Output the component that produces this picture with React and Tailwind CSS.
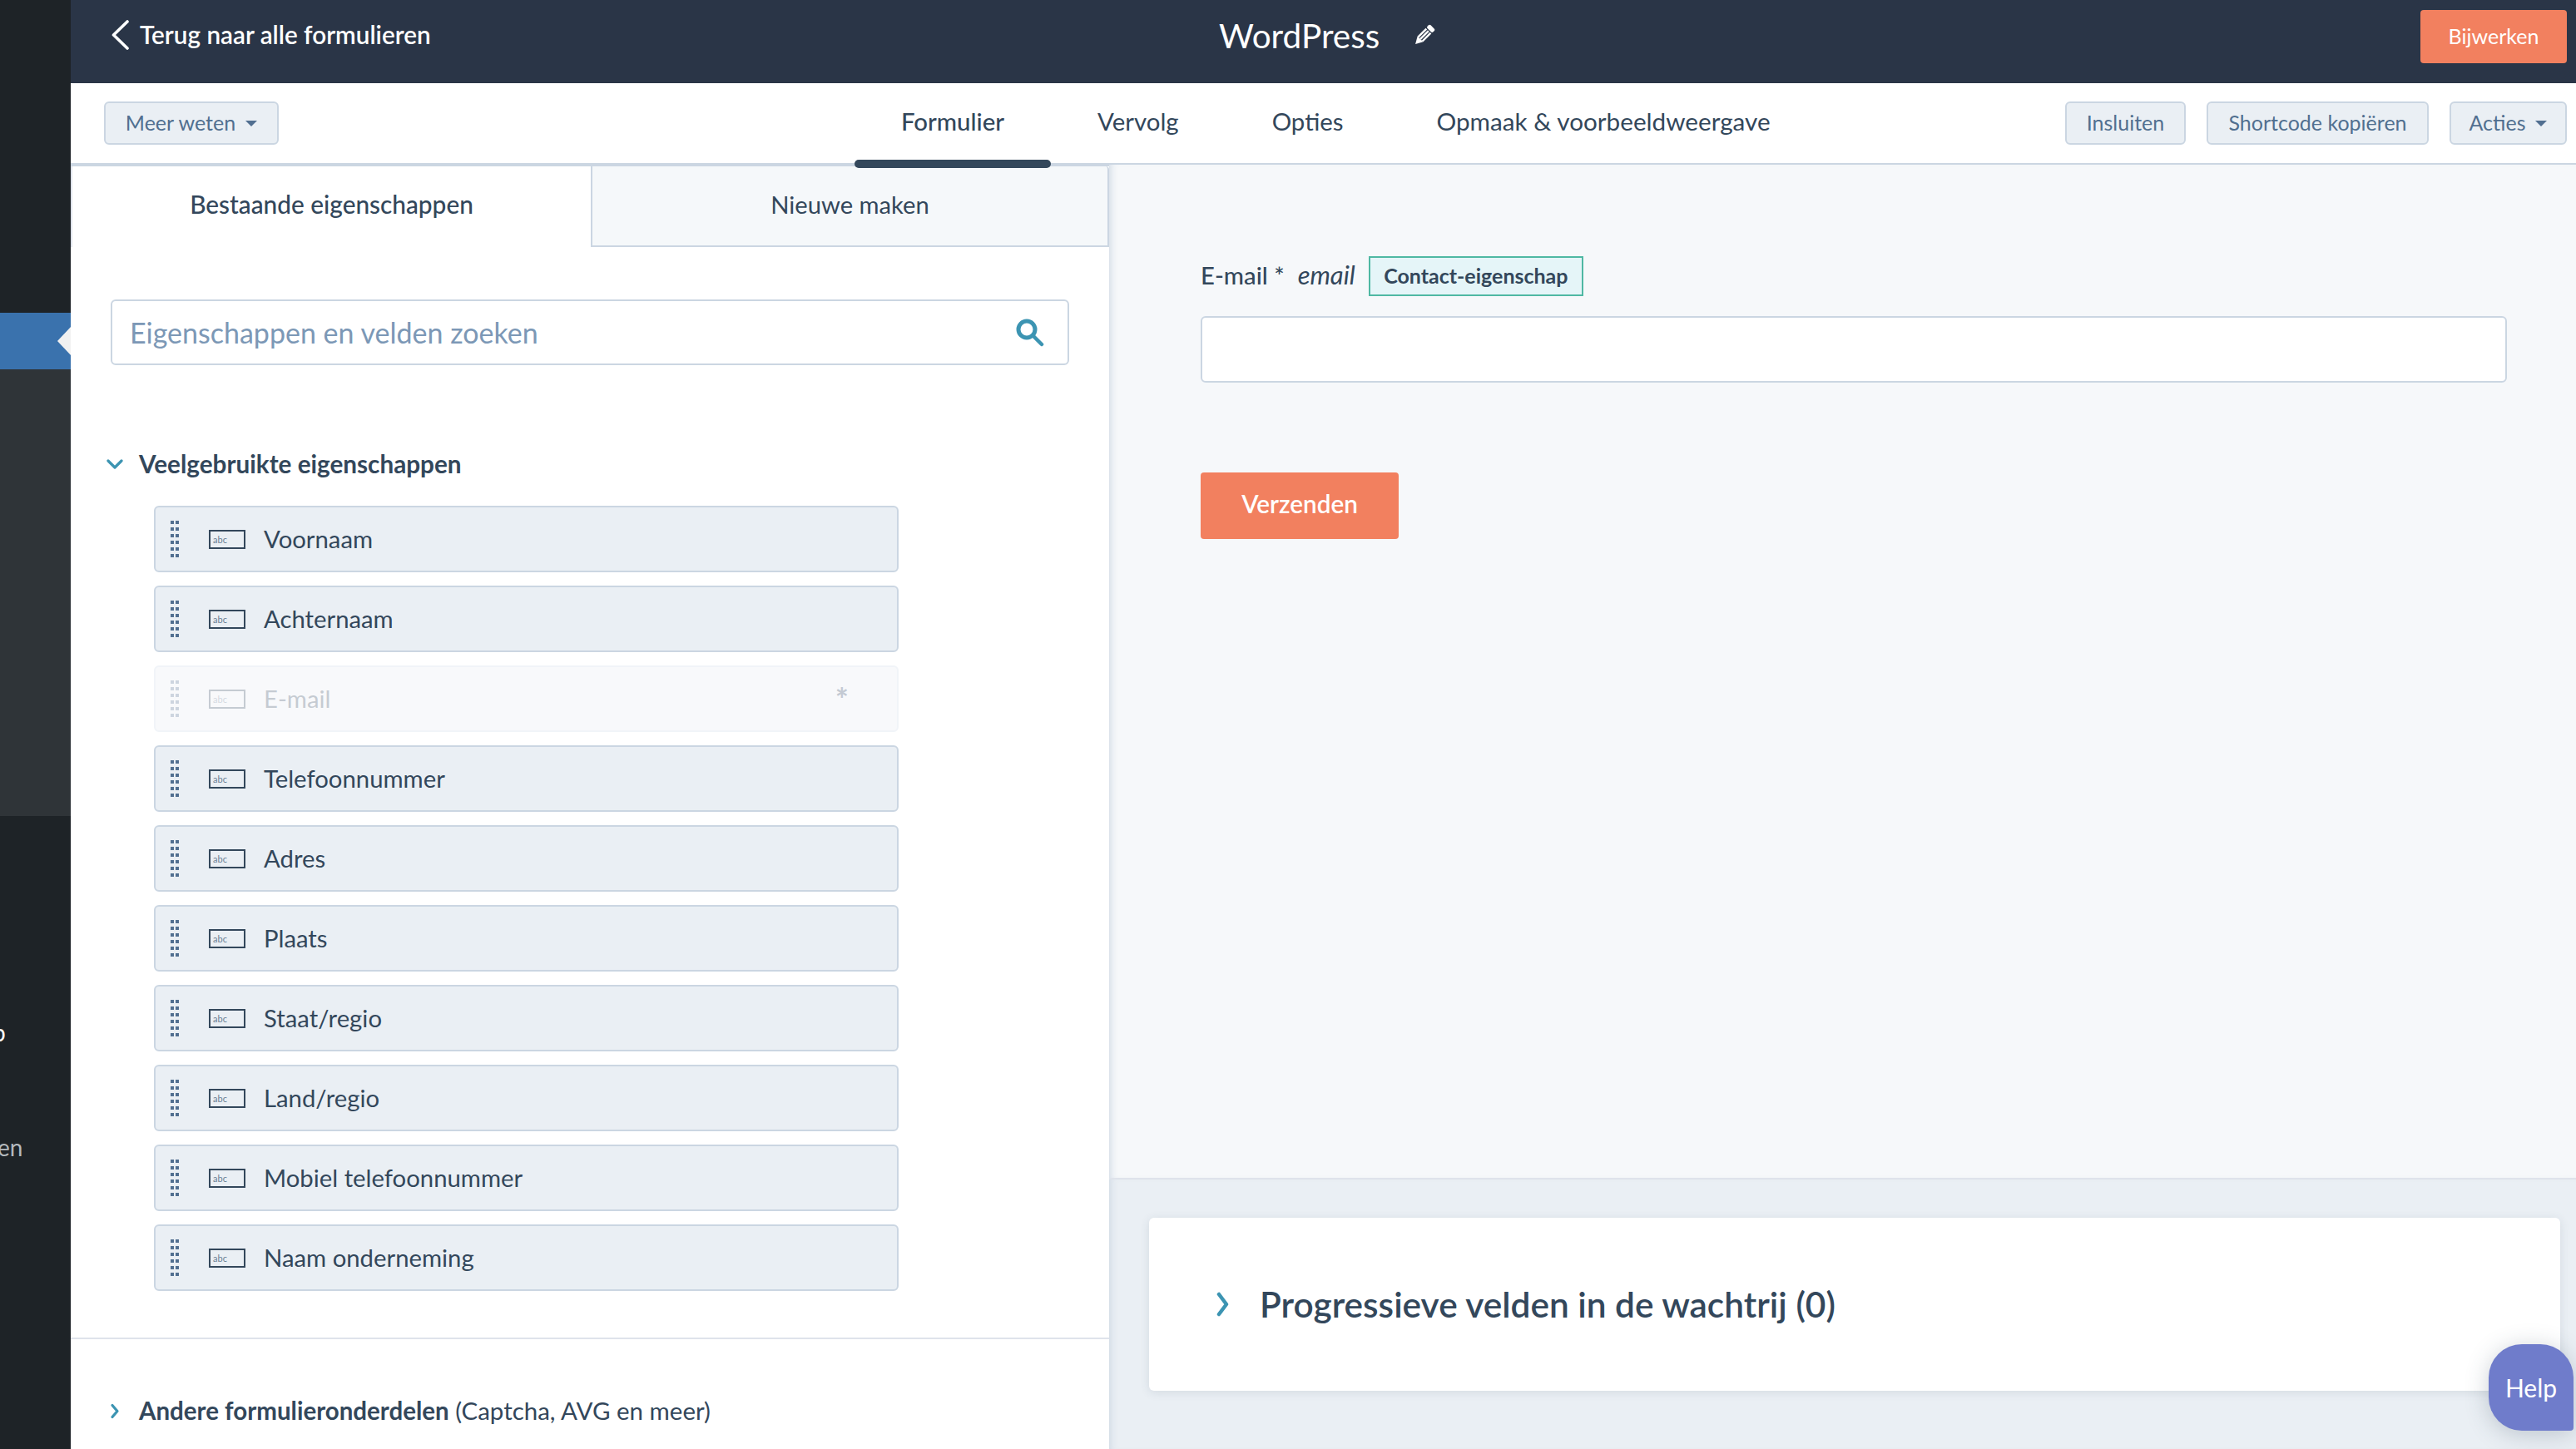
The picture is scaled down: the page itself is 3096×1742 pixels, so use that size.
const fields = [
  { label: "Voornaam" },
  { label: "Achternaam" },
  { label: "E-mail", muted: true },
  { label: "Telefoonnummer" },
  { label: "Adres" },
  { label: "Plaats" },
  { label: "Staat/regio" },
  { label: "Land/regio" },
  { label: "Mobiel telefoonnummer" },
  { label: "Naam onderneming" },
];

const Caret = () => (
  <span className="ml-[12px] w-0 h-0 border-x-[7px] border-x-transparent border-t-[7px] border-t-[#516f90]"></span>
);

const GreyButton = ({ children, className = "" }) => (
  <button className={`h-[52px] flex items-center justify-center bg-[#eaeff4] border-2 border-[#cbd6e2] rounded-[6px] text-[25px] text-[#516f90] ${className}`}>
    {children}
  </button>
);

const Grip = () => (
  <div className="grid grid-cols-2 gap-x-[2px] gap-y-[4px] w-[10px]">
    {Array.from({ length: 12 }).map((_, i) => (
      <span key={i} className="w-[4px] h-[4px] bg-[#516f90]"></span>
    ))}
  </div>
);

const FieldRow = ({ label, muted }) => (
  <div className={`h-[80px] flex items-center border-2 rounded-[6px] ${muted ? "bg-[#f8f9fb] border-[#f1f4f8]" : "bg-[#eaeff4] border-[#cbd6e2]"}`}>
    <div className={`flex items-center flex-1 pl-[18px] ${muted ? "opacity-25" : ""}`}>
      <Grip />
      <div className="ml-[36px] w-[44px] h-[23px] border-2 border-[#33475b] flex items-center pl-[3px] text-[11px] leading-none text-[#6b7f95]">
        abc
      </div>
      <span className="ml-[22px] text-[29.3px] text-[#33475b]">{label}</span>
    </div>
    {muted && <span className="mr-[58px] text-[38px] font-bold leading-none text-[#c4cad3]">*</span>}
  </div>
);

const PencilIcon = () => (
  <svg viewBox="0 0 24 24" className="ml-[38px] w-[29px] h-[29px] text-white" fill="currentColor">
    <g transform="rotate(45 12 12)">
      <rect x="8" y="-1" width="8" height="4.5" rx="1.6" />
      <rect x="8" y="4.5" width="2" height="11.5" />
      <rect x="11" y="4.5" width="2" height="11.5" />
      <rect x="14" y="4.5" width="2" height="11.5" />
      <path d="M8 16h8l-4 7z" />
    </g>
  </svg>
);

const Chevron = ({ box, d, width, className }) => (
  <svg viewBox={box} className={className} fill="none" stroke="currentColor" strokeWidth={width} strokeLinecap="round" strokeLinejoin="round">
    <path d={d} />
  </svg>
);

export default function App() {
  return (
    <div className="relative flex w-[3096px] h-[1742px] overflow-hidden bg-white font-['Lato',sans-serif]">
      {/* wp sidebar */}
      <div className="w-[85px] shrink-0 flex flex-col bg-[#1e2327] overflow-hidden">
        <div className="h-[376px]"></div>
        <div className="relative h-[68px] bg-[#3a72ad]">
          <span className="absolute right-0 top-[17px] w-0 h-0 border-y-[17px] border-y-transparent border-r-[16px] border-r-[#f1f1f1]"></span>
        </div>
        <div className="h-[537px] bg-[#2f3438]"></div>
        <div className="h-[277px] flex items-end">
          <span className="-ml-[9px] text-[28px] leading-[34px] text-white">p</span>
        </div>
        <div className="mt-[104px]">
          <span className="block -ml-[3px] text-[28px] leading-[34px] text-[#b4b9be]">en</span>
        </div>
      </div>

      <div className="flex-1 flex flex-col min-w-0">
        {/* header */}
        <header className="h-[100px] shrink-0 bg-[#2a3547] flex items-center">
          <div className="w-[1380px] shrink-0 flex items-center h-full pb-[16px] pl-[48px]">
            <Chevron box="0 0 22 38" d="M20 3L3.5 19 20 35" width="3.6" className="w-[22px] h-[38px] text-white" />
            <span className="ml-[13px] text-[29.7px] font-semibold text-white">Terug naar alle formulieren</span>
          </div>
          <div className="flex items-center pb-[14px]">
            <span className="text-[40.5px] text-white">WordPress</span>
            <PencilIcon />
          </div>
          <button className="ml-auto mr-[11px] mb-[12px] w-[176px] h-[64px] bg-[#f2805f] rounded-[4px] text-[25px] text-white">
            Bijwerken
          </button>
        </header>

        {/* sub navigation */}
        <div className="relative h-[96px] shrink-0 flex items-center bg-white">
          <GreyButton className="ml-[40px] w-[210px]">
            Meer weten
            <Caret />
          </GreyButton>
          <nav className="ml-[692px] flex items-center h-full text-[29.4px] text-[#33475b]">
            <div className="relative h-full flex items-center px-[56px] pb-[3px] font-medium">
              Formulier
              <span className="absolute z-10 left-0 w-[236px] bottom-[-6px] h-[10px] rounded-full bg-[#33475b]"></span>
            </div>
            <div className="h-full flex items-center px-[56px] pb-[3px]">Vervolg</div>
            <div className="h-full flex items-center px-[56px] pb-[3px]">Opties</div>
            <div className="h-full flex items-center px-[56px] pb-[3px] text-[29.7px]">Opmaak &amp; voorbeeldweergave</div>
          </nav>
          <div className="ml-auto mr-[11px] flex items-center gap-[25px]">
            <GreyButton className="w-[145px]">Insluiten</GreyButton>
            <GreyButton className="w-[267px]">Shortcode kopiëren</GreyButton>
            <GreyButton className="w-[141px]">
              Acties
              <Caret />
            </GreyButton>
          </div>
        </div>

        <div className="flex-1 flex min-h-0 border-t-2 border-[#cbd6e2]">
          {/* left panel */}
          <aside className="w-[1248px] shrink-0 flex flex-col">
            <div className="h-[99px] shrink-0 flex border-t-2 border-[#cbd6e2] text-[#33475b]">
              <div className="w-[625px] flex items-center justify-center pb-[4px] border-l-2 border-[#dfe3eb] text-[29.8px] font-medium">
                Bestaande eigenschappen
              </div>
              <div className="flex-1 flex items-center justify-center pb-[3px] bg-[#f5f8fa] border-x-2 border-b-2 border-[#cbd6e2] rounded-tr-[4px] text-[29.2px]">
                Nieuwe maken
              </div>
            </div>

            <div className="mt-[63px] mx-[48px] h-[79px] shrink-0 flex items-center justify-between border-2 border-[#cbd6e2] rounded-[6px] pl-[21px] pr-[28px]">
              <span className="text-[34px] text-[#7c98b6]">Eigenschappen en velden zoeken</span>
              <svg viewBox="0 0 34 34" className="w-[34px] h-[34px] text-[#3c94b2]" fill="none" stroke="currentColor" strokeWidth="5" strokeLinecap="round">
                <circle cx="13" cy="13" r="10" />
                <path d="M21 21l10 10" strokeWidth="4.5" />
              </svg>
            </div>

            <div className="mt-[99px] flex items-center pl-[43px] h-[40px] shrink-0">
              <Chevron box="0 0 20 12" d="M2 2l8 8 8-8" width="3.2" className="w-[20px] h-[12px] text-[#3c94b2]" />
              <span className="ml-[19px] text-[29.7px] font-bold text-[#33475b]">Veelgebruikte eigenschappen</span>
            </div>

            <div className="mt-[30px] ml-[100px] w-[895px] flex flex-col gap-[16px] shrink-0">
              {fields.map((f) => (
                <FieldRow key={f.label} label={f.label} muted={f.muted} />
              ))}
            </div>

            <div className="mt-[56px] h-[2px] shrink-0 bg-[#dfe3eb]"></div>

            <div className="mt-[66px] flex items-center pl-[47px] h-[40px] shrink-0 text-[29.5px] text-[#33475b]">
              <Chevron box="0 0 12 19" d="M3 2.5l6 7-6 7" width="3.2" className="w-[12px] h-[19px] text-[#3c94b2]" />
              <span className="ml-[23px]">
                <span className="font-bold">Andere formulieronderdelen</span> (Captcha, AVG en meer)
              </span>
            </div>
          </aside>

          {/* preview panel */}
          <main className="flex-1 min-w-0 flex flex-col">
            <div className="h-[1218px] shrink-0 pl-[110px] pt-[110px] bg-[#f6f8fa] shadow-[inset_8px_0_8px_-6px_rgba(203,214,226,0.9)]">
              <div className="flex items-center h-[48px] text-[29.3px] text-[#33475b]">
                <span className="mb-[3px] font-medium">E-mail *</span>
                <span className="ml-[16px] mb-[3px] text-[31px] italic">email</span>
                <span className="ml-[16px] h-[48px] w-[258px] flex items-center justify-center bg-[#e5f5f8] border-2 border-[#4fb8a3] text-[25px] font-bold">
                  Contact-eigenschap
                </span>
              </div>
              <div className="mt-[24px] w-[1570px] h-[80px] bg-white border-2 border-[#cbd6e2] rounded-[6px]"></div>
              <button className="mt-[108px] w-[238px] h-[80px] pb-[3px] bg-[#f2805f] rounded-[4px] text-[29.7px] font-semibold text-white">
                Verzenden
              </button>
            </div>
            <div className="flex-1 bg-[#eaeff4] border-t-2 border-[#dfe3eb] pl-[48px] pt-[46px] shadow-[inset_8px_0_8px_-6px_rgba(203,214,226,0.9)]">
              <div className="w-[1696px] h-[208px] bg-white rounded-[6px] shadow-[0_2px_12px_rgba(51,71,91,0.12)] flex items-center pl-[80px]">
                <Chevron box="0 0 17 30" d="M4 3l9 12-9 12" width="4.5" className="w-[17px] h-[30px] text-[#3c94b2]" />
                <span className="ml-[36px] text-[42.4px] font-semibold text-[#33475b]">Progressieve velden in de wachtrij (0)</span>
              </div>
            </div>
          </main>
        </div>
      </div>

      {/* help bubble */}
      <div className="absolute left-[2991px] top-[1616px] w-[102px] h-[104px] flex items-center justify-center bg-[#6f7ccb] rounded-[40px] rounded-br-[4px] shadow-[0_4px_28px_rgba(51,71,91,0.25)] text-[30px] text-white">
        Help
      </div>
    </div>
  );
}
